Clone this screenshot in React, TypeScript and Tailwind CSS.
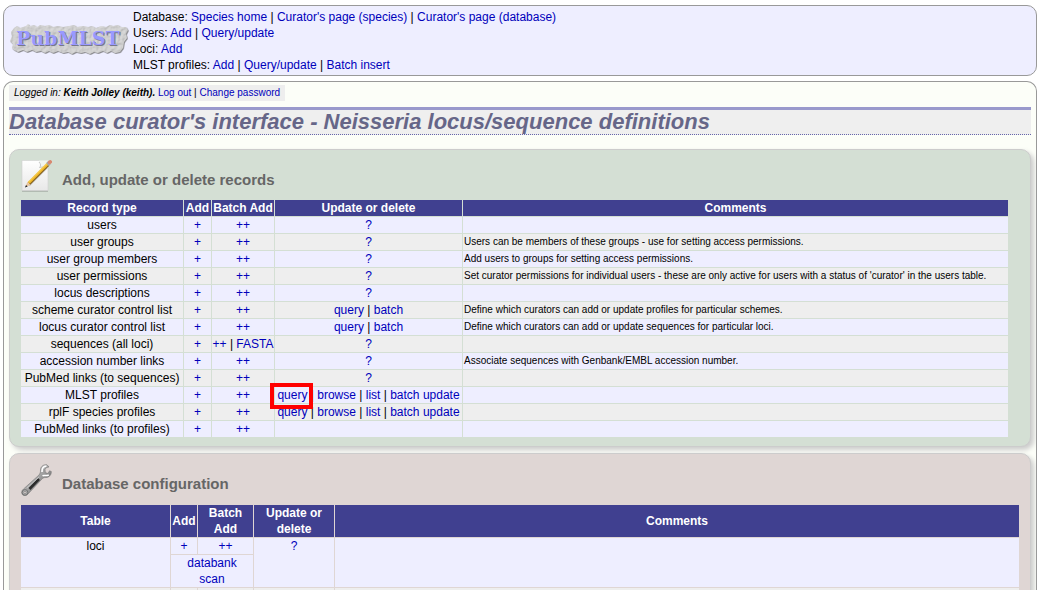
import type { ReactNode } from "react";

function Link({ children }: { children: ReactNode }) {
  return (
    <a href="#" className="text-[#0000bb] hover:underline">
      {children}
    </a>
  );
}

/* A list of links with vertical bars between them. */
function Links({ items, marked }: { items: string[]; marked?: string }) {
  return (
    <>
      {items.map((item, i) => (
        <span key={item}>
          {i > 0 && " | "}
          {item === marked ? (
            <span className="relative">
              <Link>{item}</Link>
              <span className="pointer-events-none absolute -top-[5px] -right-[6px] -bottom-[7px] -left-[7px] border-4 border-[#ff0000]" />
            </span>
          ) : (
            <Link>{item}</Link>
          )}
        </span>
      ))}
    </>
  );
}

function Logo() {
  return (
    <svg width="122" height="36" viewBox="0 0 122 36" role="img" aria-label="PubMLST">
      <defs>
        <filter id="stone" x="-5%" y="-10%" width="110%" height="125%">
          <feTurbulence type="fractalNoise" baseFrequency="0.28" numOctaves="3" seed="7" result="noise" />
          <feDiffuseLighting in="noise" surfaceScale="0.9" lightingColor="#dadada" result="light">
            <feDistantLight azimuth="225" elevation="64" />
          </feDiffuseLighting>
          <feComposite in="light" in2="SourceAlpha" operator="in" result="rock" />
          <feDropShadow in="rock" dx="0.7" dy="0.8" stdDeviation="0.5" floodColor="#666" floodOpacity="0.9" />
        </filter>
      </defs>
      <path
        filter="url(#stone)"
        d="M5 5L8 3L11 5L14 4L17 3L19 1L21 3L25 2L28 4L31 2L36 3L40 2L44 4L49 3L54 4L60 3L65 2L68 4L74 3L79 4L83 3L87 5L92 3L97 4L101 2L104 3L109 2L112 4L117 4L119 7L117 11L118 15L115 19L114 25L111 29L106 30L102 28L98 30L94 28L89 30L85 29L81 31L76 29L72 30L67 29L63 31L59 29L54 30L49 28L44 30L40 28L36 30L32 28L27 29L23 27L18 29L14 27L9 29L5 27L3 25L4 21L1 18L3 13L2 9Z"
      />
      <text x="8" y="23" fontFamily="DejaVu Serif" fontWeight="bold" fontSize="19" fill="#77778c" aria-hidden="true">
        PubMLST
      </text>
      <text x="7" y="22" fontFamily="DejaVu Serif" fontWeight="bold" fontSize="19" fill="#9999ff">
        PubMLST
      </text>
    </svg>
  );
}

function NotepadIcon() {
  return (
    <svg width="32" height="32" viewBox="0 0 32 32" aria-hidden="true">
      <defs>
        <linearGradient id="paper" x1="0" y1="0" x2="0" y2="1">
          <stop offset="0" stopColor="#ffffff" />
          <stop offset="1" stopColor="#e8e8e8" />
        </linearGradient>
      </defs>
      <path d="M1 30.500H27V31.500H1Z" fill="#8f988f" />
      <path d="M1 .5H18L27 8V30.500H1Z" fill="url(#paper)" stroke="#d0d0d0" strokeWidth=".6" />
      <path d="M18 .5C20 3 20 6 18.500 7.500C22 6.500 25 7 27 9V.5Z" fill="#f1f5f1" />
      <path d="M18 2C20 4 20 6 18.500 7.500C21 7 22 7 23 7" fill="none" stroke="#bbb" strokeWidth=".8" />
      <path d="M8 25.500L26 7.500" stroke="#777" strokeOpacity=".35" strokeWidth="2" />
      <path d="M8 23.500L27 4.500" stroke="#8a6420" strokeWidth="3.800" />
      <path d="M7.700 22.800L26.500 4" stroke="#f0b92a" strokeWidth="2.600" />
      <path d="M7.200 22.200L26 3.400" stroke="#ffe282" strokeWidth=".9" />
      <path d="M26.500 4.500L28.500 2.500" stroke="#a9a9a9" strokeWidth="3.900" />
      <path d="M28.600 2.400L29.200 1.900" stroke="#d98870" strokeWidth="3.600" strokeLinecap="round" />
      <path d="M6.300 22L9.300 25L4.500 27Z" fill="#e8c39a" />
      <path d="M5 25L6.700 26.500L4 27.600Z" fill="#222" />
    </svg>
  );
}

function WrenchIcon() {
  return (
    <svg width="32" height="32" viewBox="0 0 32 32" aria-hidden="true">
      <defs>
        <linearGradient id="steel" x1="0" y1="0" x2="1" y2="1">
          <stop offset="0" stopColor="#f2f2f2" />
          <stop offset=".5" stopColor="#a0a0a0" />
          <stop offset="1" stopColor="#444" />
        </linearGradient>
      </defs>
      <path
        d="M26 .8C22.500 .3 19.500 2.500 19.500 6C19.500 8 19.200 9.500 18 11L2.500 25C.3 26.800 .3 29.300 1.500 30.700C3 32.200 5.500 31.800 6.800 30.200L20.500 15.500C21.800 14 23 13.500 24.800 13.500C28 13.500 30.500 11 30.300 7.500L28.500 6.800L27 9.500L24.300 8.600L24 5.500L25.500 3.500L28 3Z"
        fill="url(#steel)"
        stroke="#777"
        strokeWidth=".6"
      />
      <path d="M8.500 25L18 15" stroke="#2c2c2c" strokeWidth="2.600" />
      <path d="M6 24L18 13" stroke="#c4c4c4" strokeWidth="1" />
      <path d="M21 8C20.800 4.500 22.300 2.300 25.500 2M21.500 11.800C23 11 25.500 12.300 27.800 10.800" fill="none" stroke="#fff" strokeWidth="1.600" />
      <circle cx="4" cy="28.400" r="2.800" fill="#b0b0b0" stroke="#666" strokeWidth=".8" />
      <circle cx="4" cy="28.400" r="1.200" fill="#dfd6d4" stroke="#666" strokeWidth=".5" />
    </svg>
  );
}

const menu: [string, string[]][] = [
  ["Database", ["Species home", "Curator's page (species)", "Curator's page (database)"]],
  ["Users", ["Add", "Query/update"]],
  ["Loci", ["Add"]],
  ["MLST profiles", ["Add", "Query/update", "Batch insert"]],
];

type RecordRow = { name: string; batch?: string[]; update?: string[]; marked?: string; comment?: string };

const profileLinks = ["query", "browse", "list", "batch update"];

const records: RecordRow[] = [
  { name: "users" },
  { name: "user groups", comment: "Users can be members of these groups - use for setting access permissions." },
  { name: "user group members", comment: "Add users to groups for setting access permissions." },
  {
    name: "user permissions",
    comment:
      "Set curator permissions for individual users - these are only active for users with a status of 'curator' in the users table.",
  },
  { name: "locus descriptions" },
  {
    name: "scheme curator control list",
    update: ["query", "batch"],
    comment: "Define which curators can add or update profiles for particular schemes.",
  },
  {
    name: "locus curator control list",
    update: ["query", "batch"],
    comment: "Define which curators can add or update sequences for particular loci.",
  },
  { name: "sequences (all loci)", batch: ["++", "FASTA"] },
  { name: "accession number links", comment: "Associate sequences with Genbank/EMBL accession number." },
  { name: "PubMed links (to sequences)" },
  { name: "MLST profiles", update: profileLinks, marked: "query" },
  { name: "rplF species profiles", update: profileLinks },
  { name: "PubMed links (to profiles)", update: [] },
];

const tableClass = "border-separate border-spacing-px text-center text-[12px] leading-4";

export default function App() {
  return (
    <div className="flex h-screen flex-col gap-[5px] overflow-hidden bg-white px-[3px] pt-[5px] font-['Liberation_Sans',Arial,sans-serif] text-[12px] leading-4 text-black">
      <header className="flex shrink-0 items-center gap-[2px] rounded-[10px] border border-[#999] bg-[#eeeeff] px-[5px] pt-[3px] pb-[2px]">
        <Logo />
        <nav className="leading-4">
          {menu.map(([label, items]) => (
            <div key={label}>
              {label}: <Links items={items} />
            </div>
          ))}
        </nav>
      </header>

      <main className="min-h-0 grow overflow-hidden rounded-t-[10px] border border-b-0 border-[#999] bg-[#fcfef8] px-[5px] pt-[3px]">
        <div className="w-fit bg-[#eeeeee] px-[5px] text-[10px] leading-4">
          <i>
            Logged in: <b>Keith Jolley (keith).</b>
          </i>{" "}
          <Links items={["Log out", "Change password"]} />
        </div>

        <h1 className="mt-[6px] border-t-[3px] border-b border-t-[#9999cc] border-b-[#6666aa] bg-[#efefef] text-[22px] leading-6 font-bold text-[#666688] italic [border-bottom-style:dotted]">
          Database curator's interface - Neisseria locus/sequence definitions
        </h1>

        <section className="mt-[14px] rounded-[10px] border border-[#ccc] bg-[#d4dfd4] px-[10px] pt-[10px] pb-2 shadow-[3px_3px_5px_#ccc]">
          <div className="flex h-[39px] items-start gap-[9px] pl-px">
            <NotepadIcon />
            <h2 className="pt-[10px] text-[15px] leading-5 font-bold text-[#666]">Add, update or delete records</h2>
          </div>
          <table className={tableClass}>
            <colgroup>
              <col className="w-[162px]" />
              <col className="w-[27px]" />
              <col className="w-[62px]" />
              <col className="w-[187px]" />
              <col className="w-[545px]" />
            </colgroup>
            <thead>
              <tr className="bg-[#404090] whitespace-nowrap text-white">
                <th>Record type</th>
                <th>Add</th>
                <th>Batch Add</th>
                <th>Update or delete</th>
                <th>Comments</th>
              </tr>
            </thead>
            <tbody>
              {records.map((r) => (
                <tr key={r.name} className="bg-[#eeeeee] whitespace-nowrap odd:bg-[#eeeeff]">
                  <td>{r.name}</td>
                  <td>
                    <Link>+</Link>
                  </td>
                  <td>
                    <Links items={r.batch ?? ["++"]} />
                  </td>
                  <td>
                    <Links items={r.update ?? ["?"]} marked={r.marked} />
                  </td>
                  <td className="px-px text-left text-[10px]">{r.comment}</td>
                </tr>
              ))}
            </tbody>
          </table>
        </section>

        <section className="mt-[6px] rounded-[10px] border border-[#ccc] bg-[#dfd6d4] px-[10px] pt-[10px] pb-2 shadow-[3px_3px_5px_#ccc]">
          <div className="flex h-10 items-start gap-[9px] pl-px">
            <WrenchIcon />
            <h2 className="pt-[10px] text-[15px] leading-5 font-bold text-[#666]">Database configuration</h2>
          </div>
          <table className={`w-full ${tableClass}`}>
            <colgroup>
              <col className="w-[149px]" />
              <col className="w-[26px]" />
              <col className="w-[55px]" />
              <col className="w-[80px]" />
              <col />
            </colgroup>
            <thead>
              <tr className="bg-[#404090] text-white">
                <th>Table</th>
                <th>Add</th>
                <th>
                  Batch
                  <br />
                  Add
                </th>
                <th>
                  Update or
                  <br />
                  delete
                </th>
                <th>Comments</th>
              </tr>
            </thead>
            <tbody className="align-top">
              <tr className="bg-[#eeeeff]">
                <td rowSpan={2}>loci</td>
                <td>
                  <Link>+</Link>
                </td>
                <td>
                  <Link>++</Link>
                </td>
                <td rowSpan={2}>
                  <Link>?</Link>
                </td>
                <td rowSpan={2} />
              </tr>
              <tr className="bg-[#eeeeff]">
                <td colSpan={2}>
                  <Link>
                    databank
                    <br />
                    scan
                  </Link>
                </td>
              </tr>
              <tr className="h-4 bg-[#eeeeee]">
                <td />
                <td />
                <td />
                <td />
                <td />
              </tr>
            </tbody>
          </table>
        </section>
      </main>
    </div>
  );
}
